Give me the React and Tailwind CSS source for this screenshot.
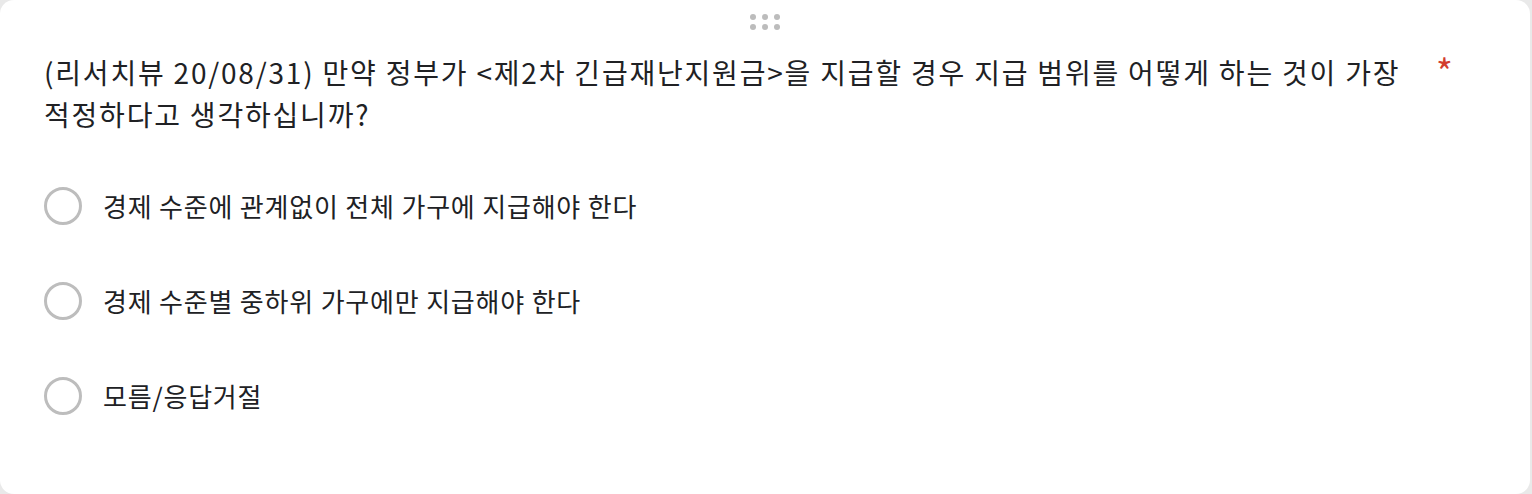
import React from 'react';

const options = [
    '경제 수준에 관계없이 전체 가구에 지급해야 한다',
    '경제 수준별 중하위 가구에만 지급해야 한다',
    '모름/응답거절',
];

const font = { fontFamily: '"Noto Sans CJK KR", "Noto Sans", sans-serif' };

const DragHandle = () => (
    <svg width="30" height="16" viewBox="0 0 30 16" className="block">
        {[0, 1, 2].map((c) =>
            [0, 1].map((r) => (
                <circle key={`${c}-${r}`} cx={3 + c * 12} cy={3 + r * 10} r="3" fill="#bcbcbc" />
            ))
        )}
    </svg>
);

const Radio = ({ label }) => (
    <div className="flex items-center h-[95px]">
        <div className="w-[38px] h-[38px] rounded-full border-[3.5px] border-[#bdbdbd] shrink-0" />
        <span className="ml-[21px] text-[26px] leading-none text-[#202124] tracking-[0.8px]">{label}</span>
    </div>
);

export default function App() {
    return (
        <div className="w-[1532px] h-[494px] bg-[#e9e9e9] overflow-hidden" style={font}>
            <div className="w-[1530px] h-[494px] bg-white rounded-[14px] flex flex-col">
                {/* drag handle */}
                <div className="h-[51px] flex justify-center pt-[14px]">
                    <DragHandle />
                </div>

                {/* question title */}
                <div className="flex pl-[44px]">
                    <div className="w-[1380px] text-[28px] leading-[42px] text-[#202124] tracking-[1.8px] break-keep">
                        (리서치뷰 20/08/31) 만약 정부가 &lt;제2차 긴급재난지원금&gt;을 지급할 경우 지급 범위를 어떻게 하는 것이 가장 적정하다고 생각하십니까?
                    </div>
                    <span className="pl-[12px] text-[36px] leading-[38px] text-[#d23c2e]">*</span>
                </div>

                {/* options */}
                <div className="flex flex-col pl-[44px] mt-[23px]">
                    {options.map((o) => (
                        <Radio key={o} label={o} />
                    ))}
                </div>
            </div>
        </div>
    );
}
